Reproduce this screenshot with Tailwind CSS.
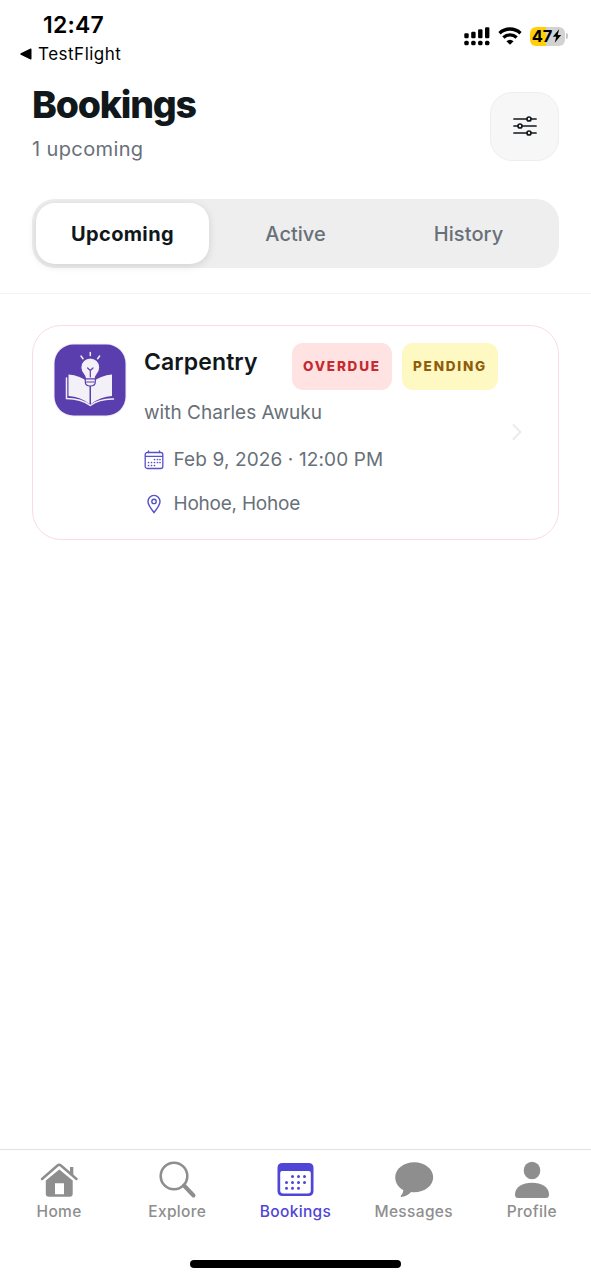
<!DOCTYPE html>
<html lang="en">
<head>
<meta charset="utf-8">
<meta name="viewport" content="width=device-width, initial-scale=1">
<title>Bookings</title>
<script src="https://cdn.jsdelivr.net/npm/@tailwindcss/browser@4"></script>
</head>
<body class="bg-white">
<div class="flex h-[1280px] w-[591px] flex-col overflow-hidden bg-white font-['Inter',sans-serif] whitespace-nowrap text-[#687078]">

  <!-- Status bar -->
  <div class="flex h-[72px] shrink-0 items-start justify-between">
    <div class="pt-[11px] pl-5">
      <div class="pl-[23px] text-[23px] leading-7 font-semibold tracking-[0.2px] text-black">12:47</div>
      <div class="mt-1 flex h-[22px] items-center text-[17px] leading-[22px] tracking-[0.5px] text-black">
        <svg class="mr-[6px] h-3 w-3" viewBox="0 0 12 12"><path d="M0.8 5.2 10.5.6Q11.5.3 11.5 1.4v9.2q0 1.1-1 .8L.8 6.8Q-.3 6 .8 5.2Z"/></svg>
        <span>TestFlight</span>
      </div>
    </div>
    <div class="mt-[26px] flex h-[20px] items-center pr-[23px]">
      <svg class="mr-[8px] h-5 w-[26px]" viewBox="0 0 26 20"><rect x=".3" y="7.200" width="4.400" height="5" rx="1.200"/><rect x="7.200" y="5.700" width="4.400" height="6.500" rx="1.200"/><rect x="14.100" y="3.200" width="4.400" height="9" rx="1.200"/><rect x="21" y="1.200" width="4.400" height="11" rx="1.200"/><rect x=".3" y="14.700" width="4.400" height="4.600" rx="1.500"/><rect x="7.200" y="14.700" width="4.400" height="4.600" rx="1.500"/><rect x="14.100" y="14.700" width="4.400" height="4.600" rx="1.500"/><rect x="21" y="14.700" width="4.400" height="4.600" rx="1.500"/></svg>
      <svg class="mr-[8px] h-[18px] w-6" viewBox="0 0 24 18" fill="none" stroke="#000"><path d="M1.5 6.2C7.400.6 16.600.6 22.500 6.200" stroke-width="3.300"/><path d="M5.400 10.500c3.700-3.500 9.500-3.500 13.200 0" stroke-width="3.300"/><path d="M12 17.800 8.400 14.300q3.600-3 7.200 0Z" fill="#000" stroke="none"/></svg>
      <div class="flex h-[19px] w-[35px] items-center justify-center rounded-[6px] bg-linear-to-r from-[#ffcf0a] from-47% to-[#d2d2d2] to-47% text-black">
        <span class="text-[16.500px] leading-5 font-bold tracking-[-0.200px]">47</span>
        <svg class="h-[14px] w-[10px]" viewBox="0 0 9 14"><path d="M6.600.3.300 7.800h3.500L2.200 13.700 8.700 5.900H5.200Z"/></svg>
      </div>
      <div class="ml-[1.500px] h-[6px] w-[2px] rounded-r-full bg-[#c8c8c8]"></div>
    </div>
  </div>

  <!-- Page header -->
  <div class="flex h-[127px] shrink-0 items-start justify-between px-8">
    <div class="pt-[11px]">
      <h1 class="text-[37.500px] leading-[44px] font-extrabold tracking-[-1.200px] text-[#11181c]">Bookings</h1>
      <p class="mt-[10px] text-[20px] leading-6 tracking-[0.380px]">1 upcoming</p>
    </div>
    <div class="mt-[20px] flex h-[69px] w-[69px] items-center justify-center rounded-[22px] border border-[#eeeeef] bg-[#f7f7f7] pb-[2px]">
      <svg class="h-6 w-6" viewBox="0 0 24 24" fill="#f7f7f7" stroke="#11181c" stroke-width="1.700" stroke-linecap="round"><path d="M1 5h22M1 12h22M1 19h22"/><circle cx="16" cy="5" r="2"/><circle cx="7" cy="12" r="2"/><circle cx="16" cy="19" r="2"/></svg>
    </div>
  </div>

  <!-- Segmented tabs -->
  <div class="h-[95px] shrink-0 border-b border-[#f4f4f5] px-8">
    <div class="grid h-[69px] grid-cols-3 rounded-[23px] bg-[#eeeeef] p-[4px] text-center text-[20px] leading-[62px] font-medium">
      <div class="h-[61px] rounded-[19px] bg-white font-bold tracking-[0.350px] text-[#11181c] shadow-[0_2px_8px_rgba(0,0,0,0.12)]">Upcoming</div>
      <div>Active</div>
      <div class="tracking-[0.100px]">History</div>
    </div>
  </div>

  <!-- Booking list -->
  <main class="min-h-0 flex-1 px-8 pt-[31px]">
    <article class="flex h-[215px] rounded-[29px] border-[1.500px] border-[#fbdcdf] pt-[17px] pl-[20px]">
      <svg class="h-[74px] w-[74px] shrink-0" viewBox="0 0 74 74">
        <rect x=".5" y=".5" width="73" height="73" rx="20" fill="#f0eef8"/>
        <rect x="1.500" y="1.500" width="71" height="71" rx="19" fill="#5b3eae"/>
        <g fill="#f3f0f8">
          <path d="M15.500 31.500Q27 32 36.500 40v21Q27 53.500 15.500 53Z"/><path d="M59 31.500Q48 32 38 40v21Q48 53.500 59 53Z"/>
          <path d="M32.300 39v-4c0-3-4.500-5-4.500-10.600a9.500 9.500 0 0 1 19 0c0 5.600-4.500 7.600-4.500 10.600v4q0 4-5 4t-5-4Z" stroke="#5b3eae" stroke-width="1.200"/>
        </g>
        <g fill="none" stroke="#f3f0f8" stroke-width="1.500" stroke-linecap="round"><path d="M13.500 35v20.500Q28 55.500 37.300 62.500 47 55.500 60.500 56"/><path d="M37.300 9.500v3M28 13l2 2.700M46.600 13l-2 2.700"/></g>
        <g fill="none" stroke="#5b3eae" stroke-width="1.200" stroke-linecap="round"><path d="M37.300 34v-6.500l-2.700-2.500M37.300 27.500l2.700-2.500M33 35.800h8.600M33.500 39h7.600"/></g>
      </svg>
      <div class="ml-[17px] w-[354px]">
        <div class="flex h-[47px] justify-between">
          <h2 class="pt-[4px] text-[23px] leading-[30px] font-semibold tracking-[0.100px] text-[#11181c]">Carpentry</h2>
          <div class="flex gap-[10px] text-[13.500px] leading-[47px] font-extrabold tracking-[1.800px]">
            <span class="h-[47px] w-[100px] rounded-[11px] bg-[#ffe2e2] pl-[11px] text-[#c52a2f]">OVERDUE</span>
            <span class="h-[47px] w-[96px] rounded-[11px] bg-[#fef8c3] pl-[11px] text-[#8f5d0a]">PENDING</span>
          </div>
        </div>
        <p class="mt-[11px] text-[19px] leading-6 tracking-[0.030px]">with Charles Awuku</p>
        <div class="mt-[23px] flex h-6 items-center text-[19px] leading-6 tracking-[0.120px]">
          <svg class="mr-[9.500px] h-5 w-5" viewBox="0 0 20 20" fill="none" stroke="#5750c9" stroke-width="1.300" stroke-linecap="round"><rect x="1.200" y="2.500" width="17.600" height="16" rx="2"/><path d="M1.500 6.300h17M4.500 1v1.500M15.500 1v1.500"/><path d="M10.500 9.500h.01M13.500 9.500h.01M16 9.500h.01M4.500 12.500h.01M7.500 12.500h.01M10.500 12.500h.01M13.500 12.500h.01M16 12.500h.01M4.500 15.500h.01M7.500 15.500h.01M10.500 15.500h.01" stroke-width="1.700"/></svg>
          <span>Feb 9, 2026 · 12:00 PM</span>
        </div>
        <div class="mt-5 flex h-6 items-center text-[19px] leading-6 tracking-[-0.230px]">
          <svg class="mr-[9.500px] h-5 w-5" viewBox="0 0 20 20" fill="none" stroke="#5750c9" stroke-width="1.400"><path d="M10 18.500C7.800 15.700 4 11 4 7.400a6 6 0 0 1 12 0C16 11 12.200 15.700 10 18.500Z"/><circle cx="10" cy="7.400" r="2.200"/></svg>
          <span>Hohoe, Hohoe</span>
        </div>
      </div>
      <svg class="mt-[79px] ml-[13px] h-5 w-3" viewBox="0 0 12 20" fill="none" stroke="#ebebed" stroke-width="2" stroke-linecap="round" stroke-linejoin="round"><path d="M2.500 3 9.500 10l-7 7"/></svg>
    </article>
  </main>

  <!-- Tab bar -->
  <nav class="flex h-[131px] shrink-0 flex-col border-t border-[#e2e2e2] text-[#8e8e8e]">
    <div class="grid grid-cols-5 pt-[10px] text-center text-[15.500px] leading-5 font-medium tracking-[0.350px]">
      <div class="flex flex-col items-center gap-[2px]">
        <svg class="h-10 w-10" viewBox="0 0 40 40" fill="currentColor"><path d="M20.300 9.500 33.700 20.500v13.200q0 3-3 3H9.800q-3 0-3-3V20.500ZM16 23.300v10.900h9V23.300Z" fill-rule="evenodd"/><path d="m3 19 15.500-13.500q1.700-1.500 3.400 0L37.500 19" fill="none" stroke="currentColor" stroke-width="2.500" stroke-linecap="round"/><path d="M31 7h3.300v10L31 14Z"/></svg>
        <span>Home</span>
      </div>
      <div class="flex flex-col items-center gap-[2px]">
        <svg class="h-10 w-10" viewBox="0 0 40 40" fill="none" stroke="currentColor" stroke-linecap="round"><circle cx="17" cy="16" r="13.300" stroke-width="2.600"/><path d="m27 25.500 9.500 10" stroke-width="4"/></svg>
        <span>Explore</span>
      </div>
      <div class="flex flex-col items-center gap-[2px] text-[#4f46d8]">
        <svg class="h-10 w-10" viewBox="0 0 40 40" fill="currentColor"><path d="M7.500 3h26q5 0 5 5v23q0 5-5 5h-26q-5 0-5-5V8q0-5 5-5ZM5.200 13v17.500q0 3 3 3h24.600q3 0 3-3V13q0-2-2-2H7.200q-2 0-2 2Z" fill-rule="evenodd"/><path d="M17.500 16.500h.01M23.500 16.500h.01M29.500 16.500h.01M11.500 22.500h.01M17.500 22.500h.01M23.500 22.500h.01M29.500 22.500h.01M11.500 28.200h.01M17.500 28.200h.01M23.500 28.200h.01" stroke="currentColor" stroke-width="3" stroke-linecap="round"/></svg>
        <span>Bookings</span>
      </div>
      <div class="flex flex-col items-center gap-[2px]">
        <svg class="h-10 w-10" viewBox="0 0 40 40" fill="currentColor"><path d="M20.200 2.300C30.700 2.300 39.200 9 39.200 17.300S30.700 32.300 20.200 32.300q-1.500 0-3-.2-4.500 4.500-10 4.800-1.200-.2-.3-1.200 2.300-2.500 2.500-5.500C4.200 27.500 1.200 22.500 1.200 17.300 1.200 9 9.700 2.300 20.200 2.300Z"/></svg>
        <span>Messages</span>
      </div>
      <div class="flex flex-col items-center gap-[2px]">
        <svg class="h-10 w-10" viewBox="0 0 40 40" fill="currentColor"><ellipse cx="20" cy="10.500" rx="8.300" ry="8.800"/><path d="M3 34.500C3 27 10.500 22.800 20 22.800S37 27 37 34.500q0 3.500-3 3.500H6q-3 0-3-3.500Z"/></svg>
        <span>Profile</span>
      </div>
    </div>
    <div class="mt-auto mb-[12.500px] h-[8px] w-[211px] self-center rounded-full bg-black"></div>
  </nav>
</div>
</body>
</html>
